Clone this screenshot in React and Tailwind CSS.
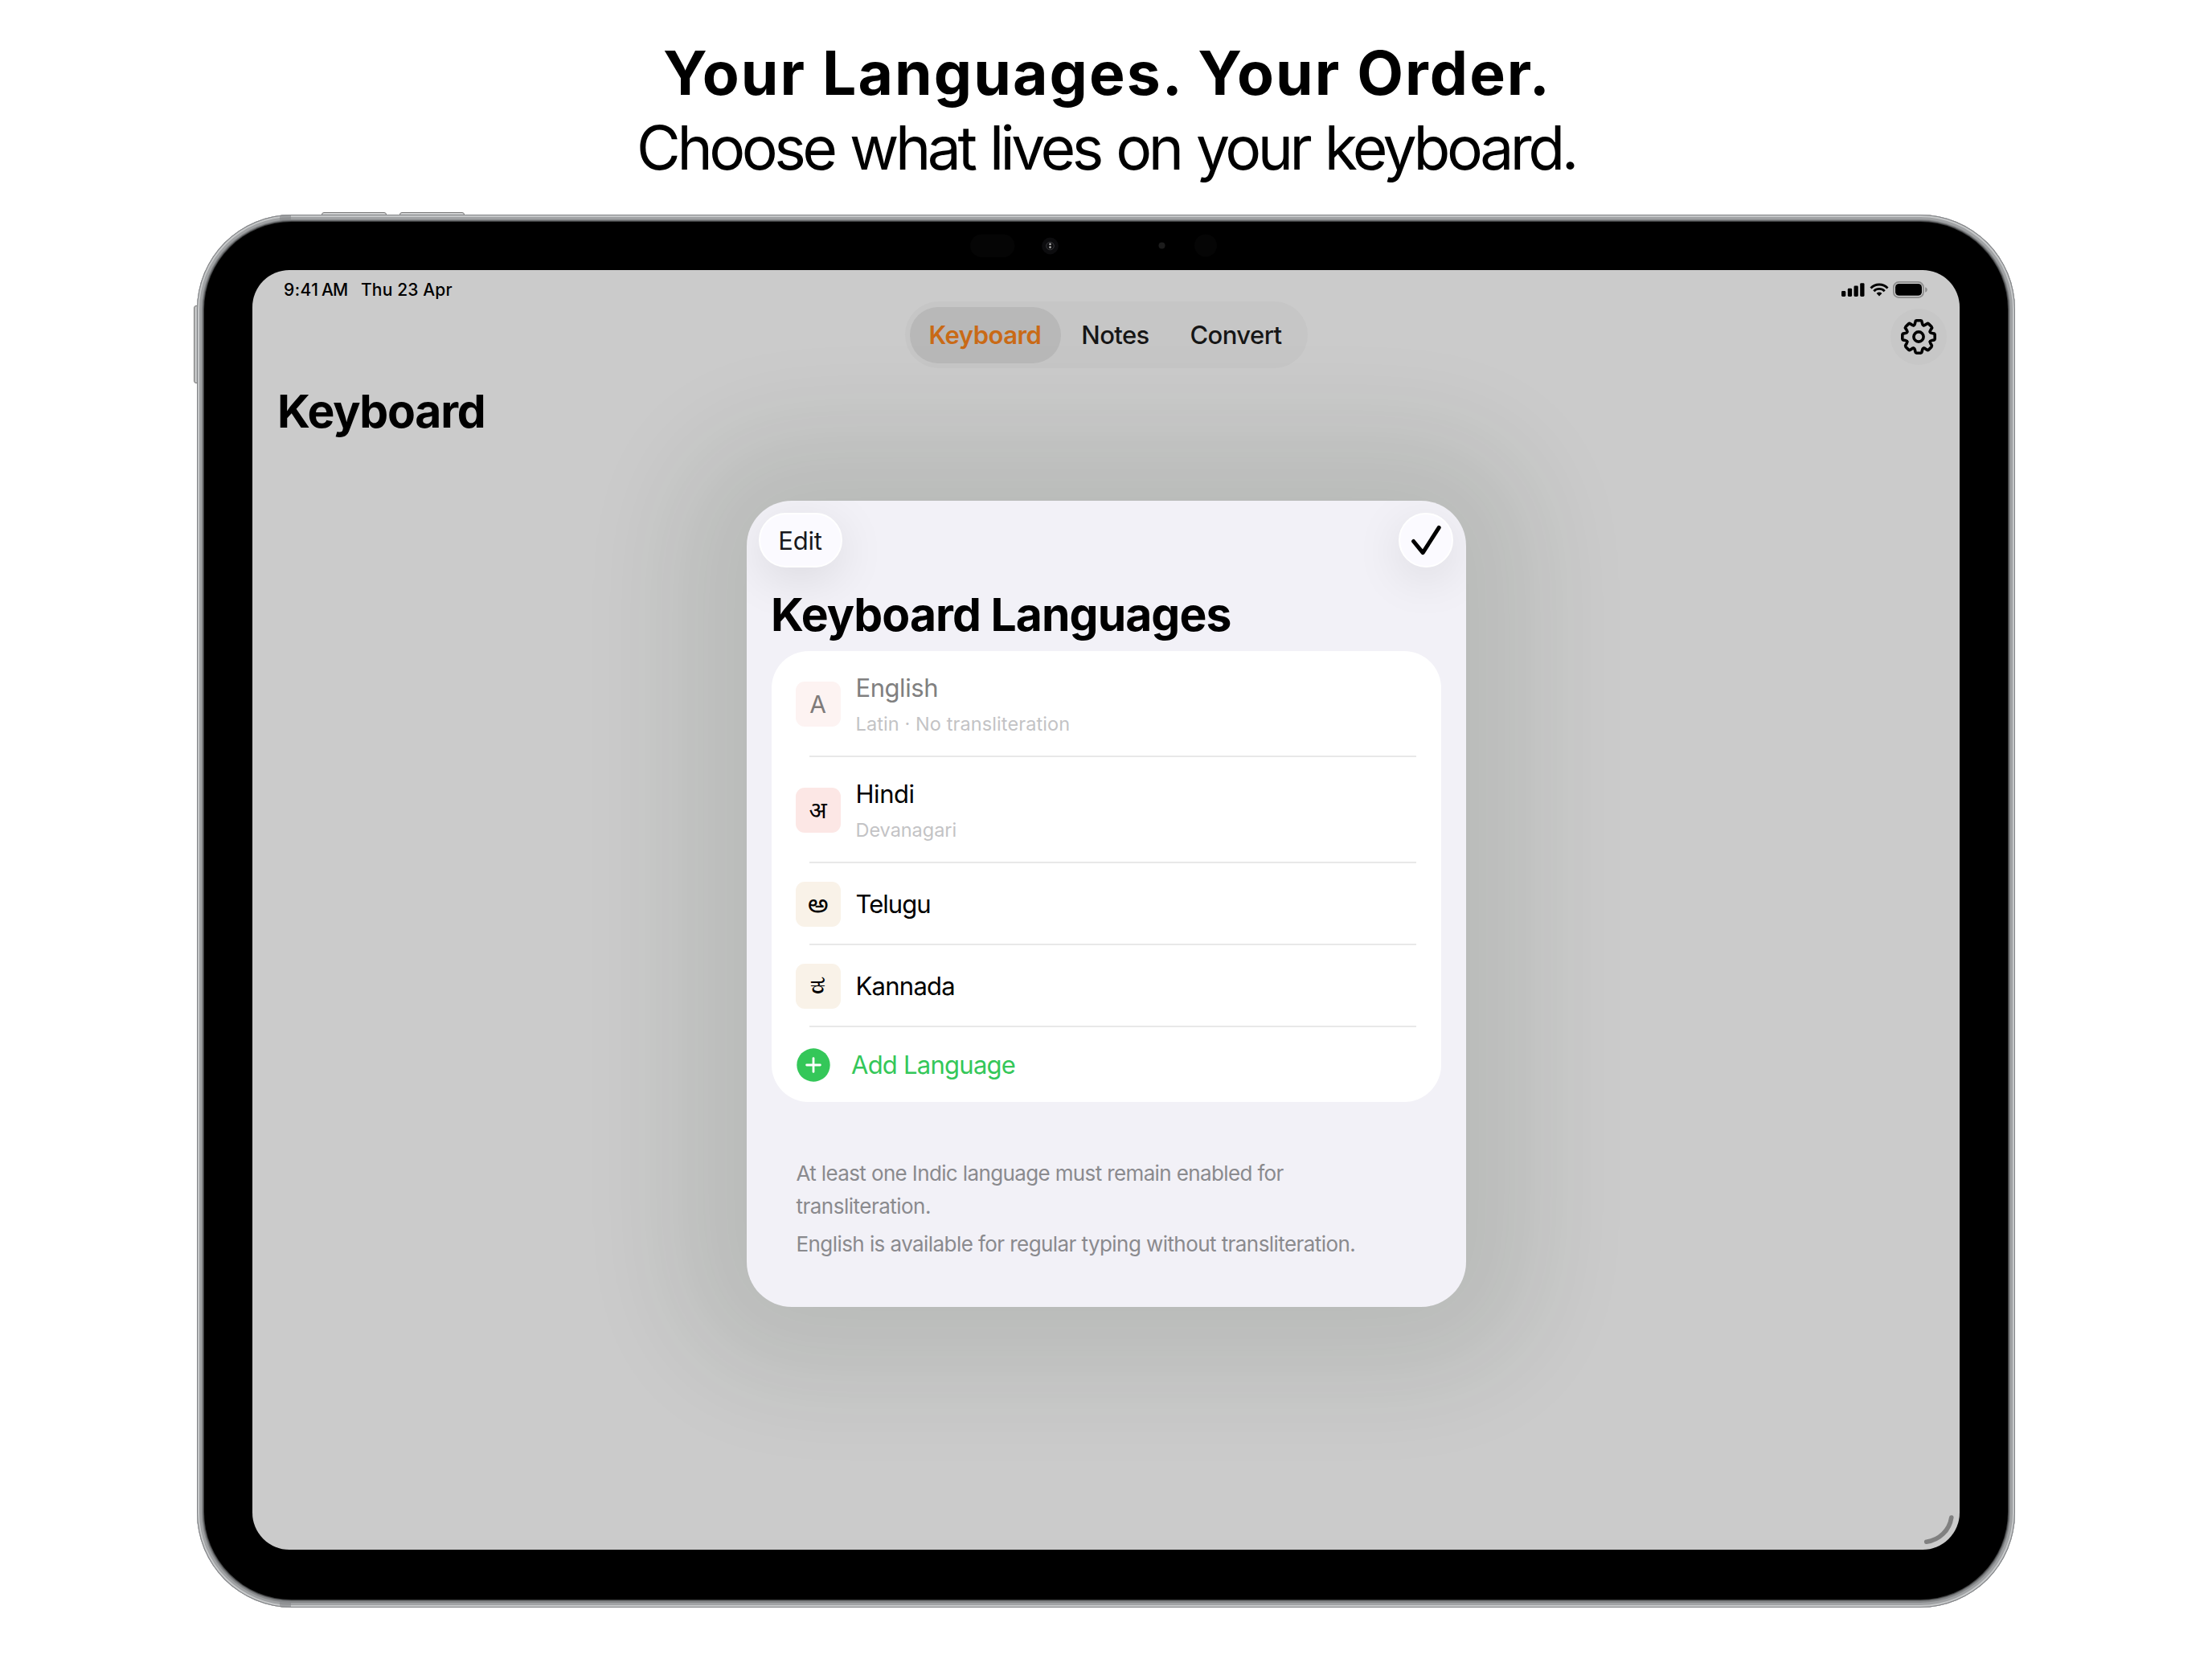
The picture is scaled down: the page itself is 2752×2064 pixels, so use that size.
import React from 'react';
import clsx from 'clsx';

const tabs = [
    { label: 'Keyboard', active: true, className: 'w-[188px] font-semibold text-[#c96a16] bg-[#b8b8b8] tracking-[-0.5px]' },
    { label: 'Notes', className: 'w-[136px] font-medium text-[#161616] tracking-[-0.6px]' },
    { label: 'Convert', className: 'w-[164px] font-medium text-[#161616] tracking-[-0.56px]' },
];

const languages = [
    {
        name: 'English',
        detail: 'Latin · No transliteration',
        glyph: 'A',
        nameClass: 'text-[#808080] tracking-[-0.45px]',
        detailClass: 'tracking-[0.1px]',
        tileClass: 'bg-[#fdf3f2] text-[#7f7b7a] text-[30px]',
        rowClass: 'h-[130px]',
    },
    {
        name: 'Hindi',
        detail: 'Devanagari',
        glyph: 'अ',
        nameClass: 'text-black tracking-[-0.45px]',
        detailClass: 'tracking-[-0.05px]',
        tileClass: 'bg-[#fce7e5] text-black text-[29px]',
        glyphClass: '-translate-y-px',
        rowClass: 'h-[130px]',
    },
    {
        name: 'Telugu',
        glyph: 'అ',
        nameClass: 'text-black tracking-[-0.95px]',
        tileClass: 'bg-[#f9f2e8] text-black text-[32px]',
        glyphClass: '-translate-y-px',
        rowClass: 'h-[100px]',
    },
    {
        name: 'Kannada',
        glyph: 'ಕ',
        nameClass: 'text-black tracking-[-0.74px]',
        tileClass: 'bg-[#f9f2e8] text-black text-[33px]',
        glyphClass: '-translate-y-[3px] scale-x-[1.4]',
        rowClass: 'h-[100px]',
    },
];

const GearIcon = () => (
    <svg width="46" height="46" viewBox="-23 -23 46 46" fill="none" stroke="#000" strokeWidth="3.6" strokeLinecap="round" strokeLinejoin="round">
        {[0, 45, 90, 135, 180, 225, 270, 315].map((deg) => (
            <path
                key={deg}
                transform={`rotate(${deg})`}
                d="M-5.93 -14.32Q-4.83 -14.78 -4.5 -16.6L-4.1 -18.8Q-3.9 -20.1 -2.6 -20.2L2.6 -20.2Q3.9 -20.1 4.1 -18.8L4.5 -16.6Q4.83 -14.78 5.93 -14.32"
            />
        ))}
        <circle r="6.1" />
    </svg>
);

const StatusBar = () => (
    <div className="flex h-[39px] items-start justify-between pt-[10px] pl-[39px] pr-[40px] text-[21px] leading-[30px] font-medium text-black">
        <div className="flex">
            <span className="w-[47px] tracking-[0.5px]">9:41</span>
            <span className="w-[49px] tracking-[-0.8px]">AM</span>
            <span className="tracking-[0.15px]">Thu 23 Apr</span>
        </div>
        <div className="flex items-start gap-[5.5px] pt-[4px]">
            <svg width="29" height="20" viewBox="0 0 29 20">
                <rect x="0" y="12" width="5.3" height="7" rx="1.4" />
                <rect x="7.8" y="8.8" width="5.3" height="10.2" rx="1.4" />
                <rect x="15.5" y="5.6" width="5.3" height="13.4" rx="1.4" />
                <rect x="23.2" y="2.2" width="5.3" height="16.8" rx="1.4" />
            </svg>
            <svg width="24" height="20" viewBox="0 0 24 20">
                <g fill="none" stroke="#000" strokeWidth="2.9">
                    <path d="M1.5 8.4A14.6 14.6 0 0 1 22.5 8.4" />
                    <path d="M5.3 12.2A9.4 9.4 0 0 1 18.7 12.2" />
                </g>
                <path d="M12 18.4L8.6 14.9A4.8 4.8 0 0 1 15.4 14.9Z" />
            </svg>
            <svg width="43" height="21" viewBox="0 0 43 21">
                <rect x="0.9" y="0.9" width="37" height="19.2" rx="6.4" fill="none" stroke="#8c8c8c" strokeWidth="1.8" />
                <rect x="3" y="3" width="33" height="14.8" rx="4.6" />
                <path d="M40.2 7.3Q42.8 8.2 42.8 10.5T40.2 13.7Z" fill="#8c8c8c" />
            </svg>
        </div>
    </div>
);

const LanguageRow = ({ language }) => (
    <div className={clsx('flex items-center gap-[19px] pl-[30px]', language.rowClass)}>
        <div className={clsx('mt-[2px] flex h-14 w-14 items-center justify-center rounded-[11px] leading-none', language.tileClass)}>
            <span className={language.glyphClass}>{language.glyph}</span>
        </div>
        <div className={clsx('flex flex-col', language.detail ? 'gap-[5px] pt-[2px]' : 'pt-[1px]')}>
            <div className={clsx('text-[31px] leading-[44px]', language.nameClass)}>{language.name}</div>
            {language.detail && (
                <div className={clsx('text-[23.5px] leading-[36px] text-[#c3c3c5]', language.detailClass)}>{language.detail}</div>
            )}
        </div>
    </div>
);

const LanguagesSheet = () => (
    <div className="h-[1003px] w-[895px] overflow-hidden rounded-[56px] bg-[#f2f1f7] pt-[15px] shadow-[0_0_130px_80px_rgba(34,52,26,0.1)]">
        <div className="flex justify-between pr-[16px] pl-[15px]">
            <button className="h-[68px] w-[104px] rounded-full border-2 border-white bg-[#fbfaff] pt-[2px] text-[31px] leading-[44px] tracking-[-0.2px] text-[#18181b] shadow-[0_14px_60px_rgba(0,0,0,0.1)]">
                Edit
            </button>
            <button className="flex h-[68px] w-[68px] items-center justify-center rounded-full border-2 border-white bg-[#fbfaff] shadow-[0_14px_60px_rgba(0,0,0,0.1)]">
                <svg width="40" height="40" viewBox="0 0 40 40" fill="none" stroke="#000" strokeWidth="5" strokeLinecap="round" strokeLinejoin="round">
                    <path d="M4.6 21.5L16.2 35.6L36.2 4.4" />
                </svg>
            </button>
        </div>

        <h2 className="mt-[24px] pl-[30.5px] text-[57px] leading-[70px] font-bold tracking-[-0.93px] text-black">
            Keyboard Languages
        </h2>

        <div className="mx-[31px] mt-[10px] h-[561px] rounded-[46px] bg-white">
            {languages.map((language) => (
                <React.Fragment key={language.name}>
                    <LanguageRow language={language} />
                    <div className="mr-[31px] ml-[47px] h-[2px] bg-[#e8e8e8]" />
                </React.Fragment>
            ))}
            <div className="flex h-[93px] items-center gap-[26px] pl-[31.5px] text-[31px] tracking-[-0.75px] text-[#34c759]">
                <svg width="42" height="42" viewBox="0 0 42 42">
                    <circle cx="21" cy="21" r="20.7" fill="#34c759" />
                    <path d="M21 12.6V29.4M12.6 21H29.4" stroke="#fff" strokeWidth="2.8" strokeLinecap="round" />
                </svg>
                <span className="pt-[1px]">Add Language</span>
            </div>
        </div>

        <div className="mt-[68px] flex flex-col gap-[6px] pl-[62px] text-[26px] leading-[41px] tracking-[-0.63px] text-[#8a8a8e]">
            <p>
                At least one Indic language must remain enabled for
                <br />
                <span className="tracking-[-0.51px]">transliteration.</span>
            </p>
            <p className="tracking-[-0.57px]">English is available for regular typing without transliteration.</p>
        </div>
    </div>
);

const Screen = () => (
    <div className="relative h-[1592px] w-[2124px] overflow-hidden rounded-[46px] bg-[#cbcbcb]">
        <StatusBar />
        <div className="grid h-[83px] grid-cols-[1fr_auto_1fr] items-center pr-[16px] pl-[16px]">
            <div />
            <div className="flex h-[83px] w-[501px] items-center rounded-full bg-[#c6c6c6] pl-[6px] text-[31px]">
                {tabs.map((tab) => (
                    <div key={tab.label} className={clsx('flex h-[70px] items-center justify-center rounded-full pt-[2px]', tab.className)}>
                        {tab.label}
                    </div>
                ))}
            </div>
            <div className="mt-[5px] flex h-[70px] w-[70px] items-center justify-center justify-self-end rounded-full bg-[#c7c7c7]">
                <GearIcon />
            </div>
        </div>
        <h1 className="mt-[19px] pl-[31px] text-[57px] leading-[70px] font-bold tracking-[-1.25px] text-black">Keyboard</h1>

        <div className="absolute inset-0 flex items-start justify-center pt-[287px]">
            <LanguagesSheet />
        </div>

        {/* window resize handle */}
        <svg className="absolute right-0 bottom-0" width="50" height="50" viewBox="0 0 50 50" fill="none">
            <path d="M8.7 40.3A36 36 0 0 0 39.8 10" stroke="#808080" strokeWidth="5.6" strokeLinecap="round" />
        </svg>
    </div>
);

const Device = () => (
    <div className="relative h-[1733px] w-[2262px]">
        {/* hardware buttons */}
        <div className="absolute top-[-3px] left-[155px] h-[6px] w-[81px] rounded-t-[3px] border border-[#777] bg-[#d2d3d4]" />
        <div className="absolute top-[-3px] left-[252px] h-[6px] w-[81px] rounded-t-[3px] border border-[#777] bg-[#d2d3d4]" />
        <div className="absolute top-[113px] left-[-4px] h-[97px] w-[6px] rounded-l-[3px] border border-[#777] bg-[#c2c3c4]" />

        <div className="relative h-full w-full overflow-hidden rounded-[118px] bg-[#858789] px-[9px] pt-[9px] pb-[10px] shadow-[inset_0_0_0_1px_#808285,inset_0_0_0_3px_#c6c8c9,inset_0_0_0_6px_#a0a2a4]">
            {/* antenna bands */}
            <div className="absolute top-0 left-[103px] h-[10px] w-[14px] bg-[#85878a]/60" />
            <div className="absolute bottom-0 left-[103px] h-[10px] w-[14px] bg-[#85878a]/60" />
            <div className="relative h-full w-full rounded-[109px] bg-black px-[60px] pt-[60px] shadow-[0_0_0_1px_#3c3d3e,0_0_0_2px_#6a6c6e]">
                <svg className="absolute top-[10px] left-[940px]" width="340" height="40" viewBox="0 0 340 40">
                    <rect x="13" y="5.5" width="55.5" height="28.5" rx="14.2" fill="#050505" />
                    <circle cx="112.5" cy="20" r="10.4" fill="#0c0c0e" />
                    <circle cx="112.5" cy="20" r="4.8" fill="#101012" stroke="#3b3b3e" strokeWidth="0.9" />
                    <circle cx="112.5" cy="17.8" r="1.3" fill="#b5b5b5" />
                    <circle cx="112.5" cy="21.6" r="1.3" fill="#b5b5b5" />
                    <circle cx="251.5" cy="19.5" r="4" fill="#1c1c1c" />
                    <circle cx="306" cy="19.5" r="14" fill="#050505" />
                </svg>
                <Screen />
            </div>
        </div>
    </div>
);

const App = () => {
    return (
        <div className="flex h-[2064px] w-[2752px] flex-col items-center overflow-hidden bg-white font-['Inter','Noto_Sans',sans-serif]">
            <header className="h-[267px] pt-[44px] text-center text-[75px] leading-[93px] text-black">
                <h1 className="pl-[3px] font-bold tracking-[2.05px]">Your Languages. Your Order.</h1>
                <p className="tracking-[-4.48px] [word-spacing:2.8px]">Choose what lives on your keyboard.</p>
            </header>
            <Device />
        </div>
    );
};

export default App;
